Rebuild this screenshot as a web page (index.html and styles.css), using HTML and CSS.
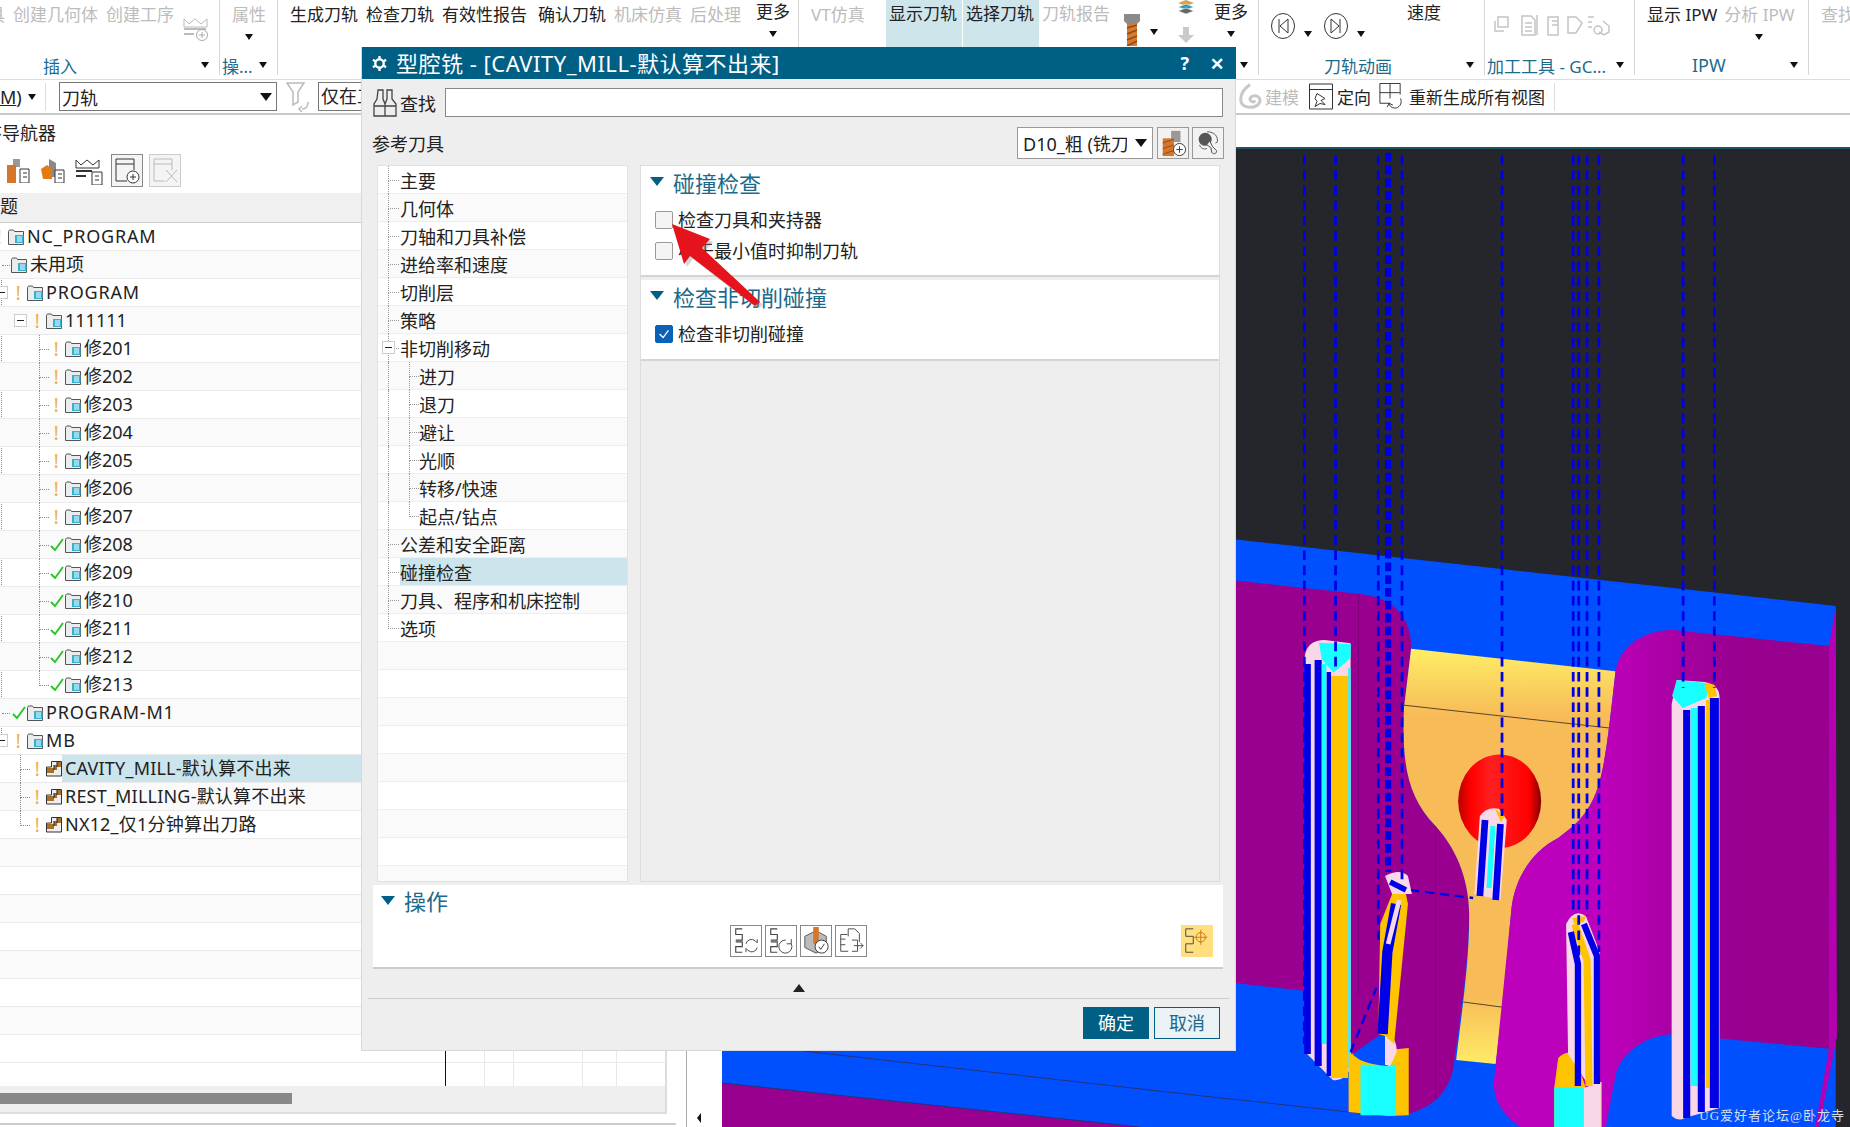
FILE: index.html
```html
<!DOCTYPE html>
<html lang="zh-CN">
<head>
<meta charset="utf-8">
<title>型腔铣</title>
<link rel="stylesheet" href="styles.css">
</head>
<body>
<svg class="defs" width="0" height="0">
  <symbol id="folder" viewBox="0 0 16 16"><path d="M.5 15.500V2.500l1-1.500h4l1 1.500h9v13z" fill="#ececec" stroke="#555"/><path d="M7 6h8.500v8H7z" fill="#35b2d2"/><path d="M9 8h5M9 10h5M9 12h5" stroke="#fff" stroke-width="1"/></symbol>
  <symbol id="op" viewBox="0 0 16 16"><path d="M.5 15V6h5V.5h10V15z" fill="#eee" stroke="#333"/><path d="M1 7h7V4h3V1h4v5h-4v3H8v3H1z" fill="#a8702c"/><path d="M11 1v5M8 4v5" stroke="#222"/></symbol>
  <symbol id="check" viewBox="0 0 14 14"><path d="M1 8l4 4 8-11" fill="none" stroke="#2ec52e" stroke-width="2"/></symbol>
  <symbol id="cutter" viewBox="0 0 20 32"><path d="M2 0h16v7l-3 3H5L2 7z" fill="#8a8a8a"/><path d="M5 10h10v22H5z" fill="#d87a2c"/><path d="M5 14l10-3M5 20l10-4M5 26l10-4M5 32l10-5" stroke="#8a4a1a" stroke-width="1.500"/></symbol>
  <symbol id="crown" viewBox="0 0 26 24"><path d="M1 10V2l5 5 6-5 6 5 6-5v8z" fill="none" stroke="#bbb"/><path d="M1 12h22M1 17h10" stroke="#bbb" stroke-width="2"/><circle cx="19" cy="18" r="5.500" fill="#fff" stroke="#aaa"/><path d="M16 18h6M19 15v6" stroke="#aaa"/></symbol>
  <symbol id="seq" viewBox="0 0 30 30"><path d="M11 2H4v6h7v6H4M4 16h7v5H4v6h7" fill="none" stroke="#444" stroke-width="1.200"/></symbol>
</svg>

<header class="ribbon">
  <section class="rg g1">
    <div class="rb-items neg">
      <span class="dim">具</span><span class="dim">创建几何体</span><span class="dim">创建工序</span>
      <svg class="ic-crown"><use href="#crown"/></svg>
    </div>
    <div class="rb-foot"><span class="rb-label lab-insert">插入</span><i class="tri"></i></div>
  </section>
  <section class="rg g2">
    <div class="rb-items pad12"><span class="rb-col dim">属性<i class="tri"></i></span></div>
    <div class="rb-foot"><span class="rb-label">操...</span><i class="tri"></i></div>
  </section>
  <section class="rg g3">
    <div class="rb-items pad12">
      <span>生成刀轨</span><span>检查刀轨</span><span>有效性报告</span><span class="gap-l">确认刀轨</span>
      <span class="dim">机床仿真</span><span class="dim">后处理</span>
      <span class="rb-col gap-l more">更多<i class="tri"></i></span>
    </div>
  </section>
  <section class="rg g4"><div class="rb-items pad12"><span class="dim">VT仿真</span></div></section>
  <section class="rg g5">
    <div class="rb-items">
      <span class="active">显示刀轨</span><span class="active">选择刀轨</span><span class="dim tb-report">刀轨报告</span>
      <svg class="ic-tool"><use href="#cutter"/></svg><i class="tri tri-side"></i>
      <span class="stack">
        <svg class="ic-layers" viewBox="0 0 16 14"><path d="M8 0l8 3-8 3-8-3z" fill="#d7a14a"/><path d="M8 4l8 3-8 3-8-3z" fill="#3a9ab5" stroke="#fff" stroke-width=".6"/><path d="M8 8l8 3-8 3-8-3z" fill="#666" stroke="#fff" stroke-width=".6"/></svg>
        <svg class="ic-down" viewBox="0 0 16 16"><path d="M5 0h6v8h5l-8 8-8-8h5z" fill="#c9c9c9"/></svg>
      </span>
      <span class="rb-col more">更多<i class="tri"></i></span>
    </div>
    <div class="rb-foot end"><i class="tri"></i></div>
  </section>
  <section class="rg g6">
    <div class="rb-items pad12 anim">
      <svg class="ic-circ" viewBox="0 0 24 26"><ellipse cx="12" cy="13" rx="11.500" ry="12.500" fill="none" stroke="#333"/><path d="M8 6v14M17 6L9 13l8 7z" fill="none" stroke="#333"/></svg><i class="tri tri-side"></i>
      <svg class="ic-circ" viewBox="0 0 24 26"><ellipse cx="12" cy="13" rx="11.500" ry="12.500" fill="none" stroke="#333"/><path d="M16 6v14M7 6l8 7-8 7z" fill="none" stroke="#333"/></svg><i class="tri tri-side"></i>
      <span class="speed">速度</span>
    </div>
    <div class="rb-foot"><span class="rb-label lab-anim">刀轨动画</span><i class="tri"></i></div>
  </section>
  <section class="rg g7">
    <div class="rb-items mini">
      <svg viewBox="0 0 122 24" class="ic-strip"><g fill="none" stroke="#c4c4c4" stroke-width="1.500"><path d="M8 4h10v10H8zM5 8v10h9"/><path d="M32 3h9l4 4v15H32zM35 10h7M35 14h7M35 18h7"/><path d="M47 2v20"/><path d="M58 4h10v18H58zM62 8h6M62 12h6"/><path d="M78 4h8l6 6-6 10h-8z"/><path d="M98 4h6M98 9h4M98 14h4"/><circle cx="108" cy="17" r="4"/><path d="M113 8l6 5v6l-5 3-5-3"/></g></svg>
    </div>
    <div class="rb-foot"><span class="rb-label tool-label">加工工具 - GC...</span><i class="tri"></i></div>
  </section>
  <section class="rg g8">
    <div class="rb-items pad12 ipw"><span>显示 IPW</span><span class="rb-col dim">分析 IPW<i class="tri"></i></span></div>
    <div class="rb-foot"><span class="rb-label lab-ipw">IPW</span><i class="tri"></i></div>
  </section>
  <section class="rg g9"><div class="rb-items pad12"><span class="dim">查找</span></div></section>
</header>

<div class="toolbar">
  <span class="tb-m"><u>M</u>)</span><i class="tri"></i><span class="tb-sep"></span>
  <div class="tb-select"><span>刀轨</span><i class="tri tri-lg"></i></div>
  <svg class="ic-filter" viewBox="0 0 24 30"><path d="M1 1h17l-6 9v10l-5 3V10z" fill="none" stroke="#bbb" stroke-width="1.500"/><path d="M22 20c0 5-2 7-6 7m0-3l-3 3 3 3" fill="none" stroke="#bbb" stroke-width="1.500"/></svg>
  <div class="tb-input">仅在工具</div>
  <div class="tb-right">
    <svg class="ic-tb" viewBox="0 0 24 26"><path d="M12 1C5 6 2 12 3 18c1 5 8 7 14 5 5-2 6-6 4-9-3-3-9-2-9 2 1 3 4 3 5 1" fill="none" stroke="#c8c8c8" stroke-width="3"/></svg>
    <span class="dim tb-model">建模</span>
    <svg class="ic-tb" viewBox="0 0 24 26"><path d="M.5.500h23v25H.5zM.5 6h23" fill="#fff" stroke="#333"/><path d="M8 10l8 5-4 2 4 4-5-1-5 3 2-5-2-3z" fill="none" stroke="#333"/></svg>
    <span class="tb-orient">定向</span>
    <svg class="ic-tb" viewBox="0 0 24 28"><path d="M.5 16V.5h21V12M11 .5V16M.5 10H21M.5 16v5H11" fill="none" stroke="#333"/><path d="M22 16c2 6-2 10-6 10s-6-3-6-5m4 2l-4-2-2 4" fill="none" stroke="#333"/></svg>
    <span class="tb-regen">重新生成所有视图</span><span class="tb-sep"></span>
  </div>
</div>

<main class="main">
  <div class="left-col">
    <div class="nav">
      <div class="nav-title"><span>工序导航器</span></div>
      <div class="nav-tools">
        <svg class="ni ni1" viewBox="0 0 26 24"><path d="M8 0h7v8H8z" fill="#999"/><path d="M2 6h9v18H2z" fill="#d6762a"/><path d="M15 10h9v14h-9z" fill="#fff" stroke="#333"/><path d="M18 14h4M18 18h4" stroke="#333"/></svg>
        <svg class="ni ni1" viewBox="0 0 26 24"><path d="M9 0l7 4v14H9z" fill="#888"/><path d="M1 10l6-4 5 4v10H3z" fill="#e47a12"/><path d="M15 11h9v13h-9z" fill="#fff" stroke="#333"/><path d="M18 15h4M18 19h4" stroke="#333"/></svg>
        <svg class="ni ni2" viewBox="0 0 28 26"><path d="M1 9V1l5 5 6-5 6 5 6-5v8z" fill="none" stroke="#333"/><path d="M1 12h16M1 17h10" stroke="#333" stroke-width="2"/><path d="M17 13h10v13H17z" fill="#fff" stroke="#333"/><path d="M20 17h4M20 21h4" stroke="#333"/></svg>
        <span class="nbox"><svg viewBox="0 0 28 28"><path d="M3 25V3h18v11M3 8h18M14 25H3" fill="none" stroke="#333"/><circle cx="20" cy="21" r="6" fill="#fff" stroke="#333"/><path d="M17 21h6M20 18v6" stroke="#333"/></svg></span>
        <span class="nbox off"><svg viewBox="0 0 28 28"><path d="M3 25V3h18v11M3 8h18M14 25H3M15 14l11 12M26 14L15 26" fill="none" stroke="#bbb"/></svg></span>
      </div>
      <div class="tree-head"><span>标题</span></div>
      <div class="tree">
        <div class="outer-guide"></div>
        <div class="row l0"><span class="st"><b class="bang">!</b></span><svg class="ti"><use href="#folder"/></svg><span class="txt lat">NC_PROGRAM</span></div>
        <div class="row l1 alt"><svg class="ti"><use href="#folder"/></svg><span class="txt">未用项</span></div>
        <div class="row l2"><i class="mbox mb2"></i><span class="st"><b class="bang">!</b></span><svg class="ti"><use href="#folder"/></svg><span class="txt lat">PROGRAM</span></div>
        <div class="row l3 alt"><i class="mbox mb3"></i><span class="st"><b class="bang">!</b></span><svg class="ti"><use href="#folder"/></svg><span class="txt">111111</span></div>
        <div class="row l4"><span class="st"><b class="bang">!</b></span><svg class="ti"><use href="#folder"/></svg><span class="txt">修201</span></div>
        <div class="row l4 alt"><span class="st"><b class="bang">!</b></span><svg class="ti"><use href="#folder"/></svg><span class="txt">修202</span></div>
        <div class="row l4"><span class="st"><b class="bang">!</b></span><svg class="ti"><use href="#folder"/></svg><span class="txt">修203</span></div>
        <div class="row l4 alt"><span class="st"><b class="bang">!</b></span><svg class="ti"><use href="#folder"/></svg><span class="txt">修204</span></div>
        <div class="row l4"><span class="st"><b class="bang">!</b></span><svg class="ti"><use href="#folder"/></svg><span class="txt">修205</span></div>
        <div class="row l4 alt"><span class="st"><b class="bang">!</b></span><svg class="ti"><use href="#folder"/></svg><span class="txt">修206</span></div>
        <div class="row l4"><span class="st"><b class="bang">!</b></span><svg class="ti"><use href="#folder"/></svg><span class="txt">修207</span></div>
        <div class="row l4 alt"><span class="st"><svg class="ck"><use href="#check"/></svg></span><svg class="ti"><use href="#folder"/></svg><span class="txt">修208</span></div>
        <div class="row l4"><span class="st"><svg class="ck"><use href="#check"/></svg></span><svg class="ti"><use href="#folder"/></svg><span class="txt">修209</span></div>
        <div class="row l4 alt"><span class="st"><svg class="ck"><use href="#check"/></svg></span><svg class="ti"><use href="#folder"/></svg><span class="txt">修210</span></div>
        <div class="row l4"><span class="st"><svg class="ck"><use href="#check"/></svg></span><svg class="ti"><use href="#folder"/></svg><span class="txt">修211</span></div>
        <div class="row l4 alt"><span class="st"><svg class="ck"><use href="#check"/></svg></span><svg class="ti"><use href="#folder"/></svg><span class="txt">修212</span></div>
        <div class="row l4 last"><span class="st"><svg class="ck"><use href="#check"/></svg></span><svg class="ti"><use href="#folder"/></svg><span class="txt">修213</span></div>
        <div class="row l2 alt hd"><span class="st"><svg class="ck"><use href="#check"/></svg></span><svg class="ti"><use href="#folder"/></svg><span class="txt lat">PROGRAM-M1</span></div>
        <div class="row l2"><i class="mbox mb2"></i><span class="st"><b class="bang">!</b></span><svg class="ti"><use href="#folder"/></svg><span class="txt lat">MB</span></div>
        <div class="row l3 op sel"><span class="st"><b class="bang">!</b></span><svg class="ti"><use href="#op"/></svg><span class="txt">CAVITY_MILL-默认算不出来</span></div>
        <div class="row l3 op alt"><span class="st"><b class="bang">!</b></span><svg class="ti"><use href="#op"/></svg><span class="txt">REST_MILLING-默认算不出来</span></div>
        <div class="row l3 op last"><span class="st"><b class="bang">!</b></span><svg class="ti"><use href="#op"/></svg><span class="txt">NX12_仅1分钟算出刀路</span></div>
        <div class="row alt"></div><div class="row"></div><div class="row alt"></div><div class="row"></div>
        <div class="row alt"></div><div class="row"></div><div class="row alt"></div><div class="row"></div>
        <i class="col-line c1"></i><i class="col-line c2"></i><i class="col-line c3"></i><i class="col-line c4"></i><i class="col-line c5"></i>
      </div>
      <div class="hscroll"><div class="thumb"></div></div>
    </div>
    <div class="nav-foot"></div>
  </div>
  <div class="gutter"><i class="tri-left"></i></div>
  <div class="view-col">
    <div class="view-band"></div>
    <div class="viewport">
      <svg class="scene" viewBox="722 149 1128 978" preserveAspectRatio="none">
        <defs>
          <linearGradient id="gTop" x1="0" y1="0" x2="0" y2="1"><stop offset="0" stop-color="#ffee66"/><stop offset=".16" stop-color="#f7bc58"/><stop offset=".84" stop-color="#f7bc58"/><stop offset="1" stop-color="#ffec66"/></linearGradient>
          <linearGradient id="gMag" gradientUnits="userSpaceOnUse" x1="950" y1="0" x2="1280" y2="0"><stop offset="0" stop-color="#bd00bb"/><stop offset="1" stop-color="#98008f"/></linearGradient>
          <linearGradient id="gRed" x1="0" y1="0" x2="1" y2="0"><stop offset="0" stop-color="#b80000"/><stop offset=".15" stop-color="#f00"/><stop offset=".4" stop-color="#ff2020"/><stop offset=".85" stop-color="#f00"/><stop offset="1" stop-color="#800"/></linearGradient>
        </defs>
        <rect x="722" y="149" width="1128" height="978" fill="#25262b"/>
        <g transform="translate(1230 500) scale(.3954 .4)">
          <polygon points="-1300,-45 1532,265 1532,1568 -1300,1568" fill="#0050ff"/>
          <path d="M-1300,60 L330,235 C420,245 460,300 458,370 L440,520 C435,650 445,740 520,815 C580,880 605,960 605,1040 C600,1200 580,1300 565,1420 C550,1500 480,1540 400,1540 L300,1530 L305,1240 L-100,1195 L-1300,1000 Z" fill="#9a008f"/>
          <path d="M458,372 L975,428 C960,560 950,660 930,720 C905,790 870,815 830,845 C760,880 720,950 712,1020 C700,1150 690,1270 672,1410 L572,1400 C590,1250 605,1150 605,1040 C605,960 580,880 520,815 C445,740 435,650 440,520 Z" fill="url(#gTop)"/>
          <path d="M440,513L960,570M590,1255L690,1268" stroke="#5a4420" stroke-width="2.500"/>
          <path d="M520,815V1500M325,235V1240M830,845V1500" stroke="#5e0060" stroke-width="1.500" opacity=".7"/>
          <ellipse cx="682" cy="753" rx="105" ry="117" fill="url(#gRed)"/>
          <path d="M975,428 C985,370 1040,325 1120,325 L1515,365 L1515,1372 L1120,1335 C1040,1340 985,1390 975,1440 L950,1568 L735,1568 C680,1530 665,1490 668,1450 L712,1020 C720,950 760,880 830,845 C870,815 905,790 930,720 C950,660 960,560 975,428 Z" fill="url(#gMag)"/>
          <path d="M1532,265 L1535,1340 L1490,1568 L1480,1568 L1515,1372 V365 Z" fill="#b400b0"/>
          <path d="M1150,325V1340" stroke="#5e0060" stroke-width="1.500" opacity=".6"/>
          <path d="M0,1497 L300,1530" stroke="#27307a" stroke-width="2.500"/>

          <path d="M188,400 Q190,350 240,350 L305,358 V1420 Q290,1455 260,1450 L190,1380 Z" fill="#f8d8e8"/>
          <g fill="none" stroke-linejoin="round">
            <path d="M196,410 V1385" stroke="#0000e6" stroke-width="17"/>
            <path d="M223,400 V1415" stroke="#0000e6" stroke-width="18"/>
            <path d="M238,410 V1360" stroke="#19ffff" stroke-width="12"/>
            <path d="M250,430 V1440" stroke="#0000e6" stroke-width="11"/>
            <path d="M277,440 V1445" stroke="#ffc400" stroke-width="43"/>
            <path d="M302,420 V1420" stroke="#50e8f0" stroke-width="7"/>
          </g>
          <path d="M225,357 L305,360 V395 L262,432 L232,398 Z" fill="#19ffff"/>

          <path d="M1117,510 V1540 Q1135,1555 1150,1545 L1238,1520 V490 Q1235,460 1200,455 L1130,450 Z" fill="#f8d8e8"/>
          <g fill="none">
            <path d="M1155,525 V1545" stroke="#0000e6" stroke-width="18"/>
            <path d="M1174,520 V1465" stroke="#19ffff" stroke-width="18"/>
            <path d="M1192,515 V1530" stroke="#0000e6" stroke-width="18"/>
            <path d="M1208,500 V1470" stroke="#ffc400" stroke-width="8"/>
            <path d="M1225,495 V1520" stroke="#0000e6" stroke-width="23"/>
          </g>
          <path d="M1130,450 L1210,458 L1205,495 L1145,520 L1118,490 Z" fill="#19ffff"/>
          <path d="M1200,458 L1225,462 L1232,490 L1210,495 Z" fill="#ffc400"/>

          <path d="M618,985 L632,790 Q650,765 680,772 L700,800 L684,1000 Z" fill="#f8d8e8"/>
          <path d="M632,990 L645,800 M672,1000 L684,810" stroke="#0000e6" stroke-width="17" fill="none"/>
          <path d="M655,970 L665,815" stroke="#19ffff" stroke-width="13"/>
          <path d="M670,772 L695,790 L685,805 Z" fill="#ffc400"/>
          <path d="M455,975 L615,995" stroke="#0000e6" stroke-width="6" stroke-dasharray="24 14"/>

          <path d="M300,1385 L452,1370 L452,1538 L400,1540 L300,1530 Z" fill="#ffc400"/>
          <path d="M330,1412 H420 V1538 H330 Z" fill="#19ffff"/>
          <path d="M310,1385 Q330,1410 400,1415 L405,1330 L375,1340 Z" fill="#0050ff"/>
          <path d="M392,1340 Q420,1335 422,1380 L405,1415 L392,1412 Z" fill="#f8d8e8"/>
          <path d="M415,1360 L450,1010 L445,985 L410,985 L380,1060 L375,1335 L392,1340 L415,1360 Z" fill="#ffc400"/>
          <path d="M386,1335 L398,1130 L420,1010" stroke="#0000e6" stroke-width="26" fill="none"/>
          <path d="M400,1110 L428,1000" stroke="#f8d8e8" stroke-width="12" fill="none"/>
          <path d="M392,940 Q430,920 450,940 L460,985 L410,985 Z" fill="#f8d8e8"/>
          <path d="M405,955 L445,975" stroke="#0000e6" stroke-width="14"/>
          <path d="M305,1380 L370,1220" stroke="#0000e6" stroke-width="6" stroke-dasharray="24 14"/>

          <path d="M820,1470 L830,1395 Q850,1375 870,1385 L900,1470 L940,1455 V1568 H820 Z" fill="#ffc400"/>
          <path d="M820,1468 L895,1470 V1568 H820 Z" fill="#19ffff"/>
          <path d="M895,1470 L938,1455 V1568 H895 Z" fill="#f8d8e8"/>
          <path d="M850,1060 Q870,1020 900,1040 L935,1130 V1460 L910,1468 L855,1385 Z" fill="#f8d8e8"/>
          <path d="M908,1465 L903,1150 L872,1060" stroke="#ffc400" stroke-width="18" fill="none"/>
          <path d="M928,1460 V1140 L895,1060 M880,1465 V1160 L862,1080" stroke="#0000e6" stroke-width="16" fill="none"/>
          <path d="M866,1045 L900,1040 L895,1055 L870,1060 Z" fill="#ffc400"/>

          <g fill="none" stroke="#0000e6">
            <g stroke-width="7" stroke-dasharray="24 14">
              <path d="M188,-900 V1360"/><path d="M267,-900 V430"/><path d="M375,-900 V1100"/><path d="M435,-900 V960"/>
              <path d="M688,-900 V790"/><path d="M868,-900 V1030"/><path d="M882,-900 V1330"/><path d="M903,-900 V1040"/>
              <path d="M933,-900 V1130"/><path d="M1146,-900 V470"/><path d="M1225,-900 V470"/>
            </g>
            <path d="M400,-900 V930" stroke-width="16" stroke-dasharray="22 10"/>
          </g>
        </g>
        <polygon points="722,1083 1140,1127 722,1127" fill="#9a008f"/>
        <path d="M722,1083L1140,1127M803,1051L1230,1099" stroke="#27307a" stroke-width="1"/>
      </svg>
      <span class="watermark">UG爱好者论坛@卧龙寺</span>
    </div>
  </div>
</main>

<div class="dialog">
  <div class="dlg-title">
    <svg class="ic-gear" viewBox="0 0 16 16"><circle cx="8" cy="8" r="4.500" fill="none" stroke="#fff" stroke-width="2.500"/><path d="M8 0v3M8 13v3M1 4l2.500 1.500M12.500 10.500L15 12M1 12l2.500-1.500M12.500 5.500L15 4" stroke="#fff" stroke-width="2.500"/></svg>
    <span class="dlg-name">型腔铣 - [CAVITY_MILL-默认算不出来]</span>
    <span class="dlg-q">?</span><span class="dlg-x">✕</span>
  </div>
  <div class="search">
    <svg class="ic-bino" viewBox="0 0 24 28"><path d="M5 1h5v9l2 5v12H1V15l3-5zM14 1h5v9l4 5v12H12V15l2-5zM1 17h11M12 17h11" fill="none" stroke="#444" stroke-width="1.300"/></svg>
    <span class="search-label">查找</span><div class="search-box"></div>
  </div>
  <div class="ref">
    <span>参考刀具</span>
    <div class="ref-tools">
      <div class="ref-select"><span>D10_粗 (铣刀</span><i class="tri tri-lg"></i></div>
      <span class="ref-btn"><svg viewBox="0 0 30 30"><path d="M13 2h10v12H13z" fill="#999"/><path d="M4 10h12v19H4z" fill="#d6762a"/><path d="M4 15l12-4M4 21l12-4M4 27l12-4" stroke="#8a4a1a"/><circle cx="22" cy="22" r="6.500" fill="#fff" stroke="#333"/><path d="M18.500 22h7M22 18.500v7" stroke="#333"/></svg></span>
      <span class="ref-btn"><svg viewBox="0 0 30 30"><path d="M14 3c8 0 12 5 11 11l-2 1" fill="none" stroke="#555"/><circle cx="12" cy="11" r="7" fill="#555"/><path d="M14 17l4 3 1 5c2 3 6 1 5-2l-4-4-3-6" fill="#eee" stroke="#444"/><path d="M6 17c1 4 5 5 8 4" fill="none" stroke="#555"/></svg></span>
    </div>
  </div>
  <div class="panels">
    <div class="side">
      <div class="srow s0"><span>主要</span></div>
      <div class="srow s0 alt"><span>几何体</span></div>
      <div class="srow s0"><span>刀轴和刀具补偿</span></div>
      <div class="srow s0 alt"><span>进给率和速度</span></div>
      <div class="srow s0"><span>切削层</span></div>
      <div class="srow s0 alt"><span>策略</span></div>
      <div class="srow s0"><i class="mbox mbs"></i><span>非切削移动</span></div>
      <div class="srow s1 alt"><span>进刀</span></div>
      <div class="srow s1"><span>退刀</span></div>
      <div class="srow s1 alt"><span>避让</span></div>
      <div class="srow s1"><span>光顺</span></div>
      <div class="srow s1 alt"><span>转移/快速</span></div>
      <div class="srow s1 end"><span>起点/钻点</span></div>
      <div class="srow s0 alt"><span>公差和安全距离</span></div>
      <div class="srow s0 cur"><span>碰撞检查</span></div>
      <div class="srow s0 alt"><span>刀具、程序和机床控制</span></div>
      <div class="srow s0 end"><span>选项</span></div>
      <div class="srow alt"></div><div class="srow"></div><div class="srow alt"></div><div class="srow"></div>
      <div class="srow alt"></div><div class="srow"></div><div class="srow alt"></div><div class="srow"></div><div class="srow alt"></div>
    </div>
    <div class="content">
      <section class="sec sec1">
        <h2 class="sec-h"><i class="tri-sec"></i>碰撞检查</h2>
        <label class="cb"><i class="box"></i>检查刀具和夹持器</label>
        <label class="cb"><i class="box"></i>小于最小值时抑制刀轨</label>
      </section>
      <section class="sec sec2">
        <h2 class="sec-h"><i class="tri-sec"></i>检查非切削碰撞</h2>
        <label class="cb"><i class="box on"><svg viewBox="0 0 18 18"><path d="M4 9l4 4 6-8" fill="none" stroke="#fff" stroke-width="1.500"/></svg></i>检查非切削碰撞</label>
      </section>
    </div>
  </div>
  <section class="ops">
    <h2 class="sec-h ops-h"><i class="tri-sec"></i>操作</h2>
    <div class="ops-row">
      <span class="opbtn"><svg viewBox="0 0 30 30"><use href="#seq"/><path d="M15 18a6 6 0 0 1 10-3l2 2v-4M27 22a6 6 0 0 1-10 3l-2-2v4" fill="none" stroke="#444"/></svg></span>
      <span class="opbtn"><svg viewBox="0 0 30 30"><use href="#seq"/><path d="M20 14a7 7 0 1 0 6 4M26 13v5h-5" fill="none" stroke="#444"/></svg></span>
      <span class="opbtn"><svg viewBox="0 0 30 30"><path d="M3 10l12-6 11 6v12l-11 6-12-6z" fill="#bbb" stroke="#555"/><path d="M12 0h6v18h-6z" fill="#d6762a"/><circle cx="21" cy="21" r="7" fill="#fff" stroke="#333"/><path d="M18 21l2 3 4-6" fill="none" stroke="#333"/></svg></span>
      <span class="opbtn"><svg viewBox="0 0 30 30"><path d="M12 2h7l5 5v9M12 2v8M4 8h7M4 8v18h8M4 13h5M4 19h5M16 14h6v12h-6M18 20h10m-3-3l3 3-3 3" fill="none" stroke="#444"/></svg></span>
      <span class="opbtn yellow"><svg viewBox="0 0 32 32"><path d="M12 3H4v8h8v8H4v9h8" fill="none" stroke="#444"/><circle cx="20" cy="12" r="5" fill="none" stroke="#c87810"/><path d="M13 12h14M20 4v16" stroke="#c87810"/></svg></span>
    </div>
  </section>
  <div class="collapse"><i class="tri-up"></i></div>
  <div class="dlg-foot"><button class="btn ok">确定</button><button class="btn cancel">取消</button></div>
</div>

<svg class="red-arrow" viewBox="0 0 92 86">
  <polygon points="2,2 40,17 32,26 90,80 85,84 20,34 14,42" fill="#8a8a8a" opacity=".35" transform="translate(3 3)"/>
  <polygon points="2,2 40,17 32,26 90,80 85,84 20,34 14,42" fill="#e5131c"/>
</svg>
</body>
</html>
```

FILE: styles.css
```css
* { box-sizing: border-box; }
html, body { margin: 0; padding: 0; }
body {
  width: 1850px; height: 1127px; overflow: hidden; position: relative;
  background: #fff; color: #222;
  font-family: "Noto Sans", "Noto Sans CJK SC", sans-serif; font-size: 18px;
  display: flex; flex-direction: column;
}
.defs { position: absolute; }
i { display: block; font-style: normal; }
svg { display: block; }

/* triangles */
.tri { width: 0; height: 0; border: 4px solid transparent; border-top: 6px solid #111; border-bottom: 0; flex: none; }
.tri-lg { border-width: 6px; border-top-width: 8px; border-bottom-width: 0; }
.tri-side { margin: 0 0 0 10px; align-self: center; }
.tri-left { width: 0; height: 0; border: 5px solid transparent; border-right: 4px solid #111; border-left: 0; }
.tri-up { width: 0; height: 0; border: 6px solid transparent; border-bottom: 8px solid #222; border-top: 0; }
.tri-sec { width: 0; height: 0; border: 7px solid transparent; border-top: 9px solid #005f85; border-bottom: 0; flex: none; }

/* ribbon */
.ribbon { height: 80px; flex: none; display: flex; border-bottom: 1px solid #ddd; font-size: 17px; overflow: hidden; }
.rg { height: 75px; display: flex; flex-direction: column; border-right: 1px solid #d6d6d6; flex: none; }
.g1 { width: 220px; } .g2 { width: 58px; } .g3 { width: 521px; } .g4 { width: 88px; }
.g5 { width: 372px; } .g6 { width: 226px; } .g7 { width: 150px; } .g8 { width: 174px; } .g9 { width: 42px; border: 0; }
.rb-items { height: 55px; display: flex; gap: 8px; line-height: 24px; padding-top: 3px; white-space: nowrap; align-items: flex-start; }
.neg { margin-left: -12px; }
.pad12 { padding-left: 12px; }
.dim { color: #bcbcbc; }
.rb-col { display: flex; flex-direction: column; align-items: center; gap: 7px; }
.more { color: #222; margin-top: -3px; }
.gap-l { margin-left: 3px; }
.g3 .more { margin-left: 7px; }
.rb-foot { height: 20px; display: flex; align-items: center; justify-content: space-between; padding-right: 10px; color: #1d6b8c; }
.rb-foot.end { justify-content: flex-end; }
.rb-label { white-space: nowrap; margin-left: 2px; }
.lab-insert { margin-left: 43px; }
.lab-anim { margin-left: 65px; }
.lab-ipw { margin-left: 57px; font-size: 18px; }
.tool-label { font-size: 17px; }
.ic-crown { width: 26px; height: 24px; margin: 14px 0 0 1px; }
.active { background: #cfe5ec; height: 60px; padding: 0 4px; width: 76px; }
.g5 .rb-items { gap: 0; margin: -2px 0 0 -1px; padding-top: 0; height: 57px; }
.g5 .active { padding-top: 4px; margin-right: 1px; padding-left: 3px; }
.tb-report { margin: 4px 0 0 2px; }
.ic-tool { width: 20px; height: 32px; margin: 16px 0 0 12px; }
.g5 .tri-side { margin: 10px 0 0 8px; }
.stack { display: flex; flex-direction: column; margin-left: 20px; align-items: center; gap: 13px; padding-top: 2px; }
.ic-layers { width: 16px; height: 14px; }
.ic-down { width: 16px; height: 16px; }
.g5 .more { margin: 2px 0 0 20px; }
.anim { padding-top: 13px; gap: 0; }
.ic-circ { width: 24px; height: 26px; }
.anim .tri-side { margin: 0 12px 0 9px; }
.speed { margin: -12px 0 0 42px; }
.anim .tri-side:nth-of-type(2) { margin-right: 0; }
.mini { padding: 13px 0 0 5px; }
.ic-strip { width: 122px; height: 24px; }
.ipw { gap: 7px; }
.ipw .tri { margin-top: 0; }

/* second toolbar */
.toolbar { height: 35px; flex: none; display: flex; align-items: center; border-bottom: 2px solid #c8c8c8; margin-top: 0; white-space: nowrap; }
.tb-m { margin-left: 0; width: 28px; }
.tb-sep { width: 1px; height: 28px; background: #ddd; margin-left: 9px; flex: none; }
.tb-select { width: 218px; height: 29px; margin-left: 13px; border: 1px solid #777; display: flex; align-items: center; justify-content: space-between; padding: 0 4px 0 2px; flex: none; }
.ic-filter { width: 24px; height: 30px; margin-left: 9px; flex: none; }
.tb-input { width: 100px; height: 29px; margin-left: 8px; border: 1px solid #777; padding-left: 2px; line-height: 26px; overflow: hidden; flex: none; }
.tb-right { margin-left: auto; width: 612px; display: flex; align-items: center; }
.ic-tb { width: 24px; height: 27px; flex: none; }
.tb-model { margin: 0 10px 0 3px; font-size: 17px; }
.tb-orient { margin: 0 8px 0 4px; font-size: 17px; }
.tb-regen { margin-left: 6px; font-size: 17px; }

/* main */
.main { flex: 1; display: flex; min-height: 0; }
.left-col { width: 687px; flex: none; border-right: 1px solid #aaa; display: flex; flex-direction: column; }
.nav { width: 667px; height: 999px; border-right: 2px solid #ddd; border-bottom: 2px solid #ddd; display: flex; flex-direction: column; overflow: hidden; }
.nav-title { height: 35px; flex: none; line-height: 36px; overflow: hidden; }
.nav-title span { margin-left: -34px; display: block; }
.nav-tools { height: 43px; flex: none; display: flex; align-items: flex-start; padding: 4px 0 0 5px; }
.ni { height: 24px; flex: none; margin-top: 5px; }
.ni1 { width: 26px; margin-right: 9px; }
.ni2 { width: 28px; margin-right: 8px; height: 26px; }
.nbox { width: 32px; height: 33px; border: 1px solid #888; background: #f4f4f4; margin-right: 6px; flex: none; padding: 1px; }
.nbox.off { border-color: #ccc; }
.tree-head { height: 30px; flex: none; background: #f0f0f0; border-bottom: 1px solid #ccc; overflow: hidden; line-height: 27px; }
.tree-head span { display: block; margin-left: -18px; }
.tree { flex: 1; position: relative; min-height: 0; }
.outer-guide { position: absolute; left: 1px; top: 28px; height: 490px; border-left: 1px dotted #888; }
.row { height: 28px; display: flex; align-items: center; border-bottom: 1px solid #eaeaea; position: relative; white-space: nowrap; }
.row.alt { background: #fafafa; }
.st { width: 19px; flex: none; display: flex; justify-content: flex-end; }
.bang { color: #f0b050; font-weight: 400; font-size: 20px; line-height: 24px; margin-right: 6px; }
.ck { width: 14px; height: 14px; margin-right: 1px; }
.ti { width: 16px; height: 16px; flex: none; }
.txt { padding-left: 3px; line-height: 27px; height: 27px; }
.lat { letter-spacing: .8px; }
.op .txt { letter-spacing: .2px; }
.l0 .st { margin-left: -11px; }
.l1 { padding-left: 11px; }
.l2 { padding-left: 8px; }
.l3 { padding-left: 27px; }
.l4 { padding-left: 46px; }
.sel .txt { flex: 1; background: #cce4ec; }
.mbox { position: absolute; width: 13px; height: 13px; border: 1px solid #ccc; background: #fff; top: 7px; }
.mbox::after { content: ""; position: absolute; left: 2px; right: 2px; top: 5px; height: 1px; background: #222; }
.mb2 { left: -5px; }
.mb3 { left: 14px; }
.l4::before, .op::before { content: ""; position: absolute; top: 0; height: 14px; border-left: 1px dotted #888; border-bottom: 1px dotted #888; }
.l4::before { left: 39px; width: 9px; }
.op::before { left: 20px; width: 9px; }
.l4::after, .op::after { content: ""; position: absolute; top: 14px; height: 14px; border-left: 1px dotted #888; }
.l4::after { left: 39px; }
.op::after { left: 20px; }
.l4.last::after, .op.last::after { display: none; }
.l1::before, .hd::before { content: ""; position: absolute; left: 2px; top: 14px; width: 8px; border-bottom: 1px dotted #888; }
.col-line { position: absolute; bottom: 0; height: 36px; width: 1px; background: #e8e8e8; }
.c1 { left: 445px; background: #111; } .c2 { left: 484px; } .c3 { left: 513px; } .c4 { left: 582px; } .c5 { left: 616px; }
.hscroll { height: 26px; flex: none; background: #efefef; padding-top: 7px; }
.thumb { width: 292px; height: 11px; background: #888; }
.nav-foot { width: 676px; margin-top: 9px; border-top: 2px solid #ccc; }
.gutter { width: 35px; flex: none; position: relative; }
.tri-left { position: absolute; left: 10px; top: 998px; }
.view-col { flex: 1; display: flex; flex-direction: column; min-width: 0; }
.view-band { height: 32px; flex: none; }
.viewport { flex: 1; position: relative; border-top: 2px solid #1e5564; min-height: 0; }
.scene { width: 100%; height: 100%; }
.watermark { position: absolute; right: 5px; bottom: 3px; color: #d8dce8; font-size: 13px; letter-spacing: 1px; font-family: "Liberation Serif", "Noto Sans CJK SC", serif; line-height: 16px; white-space: nowrap; }

/* dialog */
.dialog { position: absolute; left: 361px; top: 47px; width: 875px; height: 1004px; background: #eee; border: 1px solid #d8d8d8; border-top: 0; display: flex; flex-direction: column; padding: 0 12px; }
.dlg-title { height: 32px; flex: none; background: #005f85; color: #fff; margin: 0 -13px 0 -12px; display: flex; align-items: center; padding: 0 10px; font-size: 22px; white-space: nowrap; }
.ic-gear { width: 15px; height: 15px; margin-right: 9px; flex: none; }
.dlg-name { flex: 1; line-height: 30px; letter-spacing: .5px; }
.dlg-q { font-size: 18px; font-weight: 700; margin-right: 21px; }
.dlg-x { font-size: 17px; font-weight: 700; margin-right: 2px; }
.search { height: 29px; margin: 9px 0 1px -2px; flex: none; display: flex; align-items: center; }
.ic-bino { width: 24px; height: 28px; margin-left: 1px; flex: none; }
.search-label { margin: 0 9px 0 3px; }
.search-box { flex: 1; height: 29px; background: #fff; border: 1px solid #888; }
.ref { height: 32px; margin: 9px -1px 0 -2px; flex: none; display: flex; align-items: center; justify-content: space-between; }
.ref-tools { display: flex; gap: 3px; }
.ref-select { width: 136px; height: 32px; background: #fff; border: 1px solid #999; display: flex; align-items: center; justify-content: space-between; padding: 0 5px; white-space: nowrap; overflow: hidden; margin-right: 1px; }
.ref-select span { width: 104px; overflow: hidden; }
.ref-btn { width: 32px; height: 32px; border: 1px solid #999; background: #f2f2f2; padding: 1px; }
.panels { height: 717px; margin: 6px 3px 0; flex: none; display: flex; gap: 12px; }
.side { width: 251px; flex: none; background: #fff; border: 1px solid #e2e2e2; overflow: hidden; }
.srow { height: 28px; border-bottom: 1px solid #eee; display: flex; align-items: center; position: relative; padding-left: 22px; white-space: nowrap; }
.srow.alt { background: #fafafa; }
.srow.cur span { flex: 1; background: #cce4ec; align-self: stretch; display: flex; align-items: center; }
.s1 { padding-left: 41px; }
.s0::before { content: ""; position: absolute; left: 10px; top: 0; height: 14px; width: 10px; border-left: 1px dotted #999; border-bottom: 1px dotted #999; }
.s0::after { content: ""; position: absolute; left: 10px; top: 14px; height: 14px; border-left: 1px dotted #999; }
.s0.end::after { display: none; }
.s1::before { content: ""; position: absolute; left: 10px; top: 0; height: 28px; border-left: 1px dotted #999; }
.s1 span::before { content: ""; position: absolute; left: 31px; top: 0; height: 14px; width: 9px; border-left: 1px dotted #999; border-bottom: 1px dotted #999; }
.s1 span::after { content: ""; position: absolute; left: 31px; top: 14px; height: 14px; border-left: 1px dotted #999; }
.s1.end span::after { display: none; }
.mbs { left: 4px; z-index: 1; }
.content { flex: 1; background: #eee; border: 1px solid #ddd; display: flex; flex-direction: column; min-width: 0; }
.sec { background: #fff; border-bottom: 2px solid #d4d4d4; padding: 0 0 0 9px; }
.sec1 { height: 111px; margin-bottom: 3px; }
.sec2 { height: 81px; }
.sec-h { margin: 0 0 7px; font-size: 22px; font-weight: 400; color: #1b6a8a; display: flex; align-items: center; gap: 9px; height: 31px; }
.cb { display: flex; align-items: center; height: 31px; gap: 5px; margin-left: 5px; line-height: 24px; }
.box { width: 18px; height: 18px; border: 1px solid #999; border-radius: 2px; background: #f4f4f4; flex: none; }
.box.on { background: #0a62b8; border-color: #0a62b8; }
.ops { height: 84px; margin: 3px 0 0 -1px; flex: none; background: #fff; border-bottom: 2px solid #ccc; padding: 0 8px; }
.ops-h { height: 30px; margin-bottom: 0; }
.ops-row { display: flex; gap: 3px; padding-left: 349px; margin-top: 10px; }
.opbtn { width: 32px; height: 32px; border: 1px solid #888; background: #fff; flex: none; padding: 1px; }
.opbtn.yellow { border: 0; background: #ffdf80; margin-left: auto; margin-right: 2px; }
.collapse { height: 30px; flex: none; border-bottom: 1px solid #ccc; margin: 0 -6px; display: flex; justify-content: center; padding-top: 15px; }
.dlg-foot { flex: none; display: flex; justify-content: flex-end; gap: 5px; padding: 8px 3px 0 0; }
.btn { width: 66px; height: 32px; font: inherit; padding: 0; line-height: 28px; }
.ok { background: #005f85; color: #fff; border: 1px solid #005f85; }
.cancel { background: #eaf2f6; color: #1b6a8a; border: 1px solid #005f85; }

/* annotation */
.red-arrow { position: absolute; left: 670px; top: 222px; width: 92px; height: 86px; }
```
